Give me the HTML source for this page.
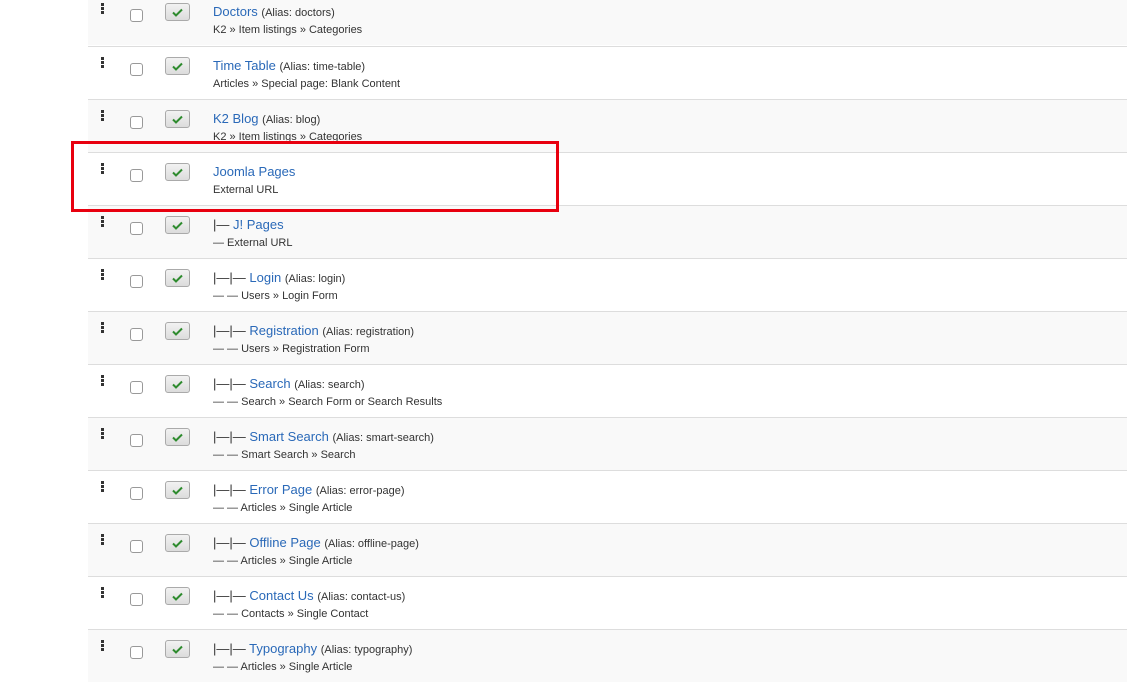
<!DOCTYPE html>
<html><head><style>
body{margin:0;width:1127px;height:662px;overflow:hidden;background:#fff;font-family:"Liberation Sans",Arial,sans-serif;position:relative}
.row{position:absolute;left:88px;width:1039px;height:52px;border-top:1px solid #ddd}
.g{background:#f9f9f9}
.drag{position:absolute;left:13px;top:10px;width:3px;height:11px;background:repeating-linear-gradient(#333 0 3px,transparent 3px 4px)}
.cb{position:absolute;left:42px;top:16px;width:11px;height:11px;border:1px solid #999;border-radius:3px;background:#fff}
.btn{position:absolute;left:77px;top:10px;width:23px;height:16px;border:1px solid #aaa;border-radius:3px;background:linear-gradient(#f2f2f2,#dcdcdc)}
.btn svg{position:absolute;left:6px;top:4px}
.t{position:absolute;left:125px;top:11px;font-size:13px;color:#333;white-space:nowrap}
.t a{color:#2a69b8;text-decoration:none}
.t small{font-size:11px;color:#333}
.s{position:absolute;left:125px;top:31px;font-size:11px;color:#333;white-space:nowrap}
.red{position:absolute;left:71px;top:141px;width:482px;height:65px;border:3px solid #e8000f}
</style></head><body>
<div class="row g" style="top:-7px;border-top:none"><div class="drag"></div><div class="cb"></div><div class="btn"><svg width="11" height="9"><path d="M1 4.5l3 3 6-6" stroke="#2e8b2e" stroke-width="2" fill="none"/></svg></div><div class="t"><a>Doctors</a> <small>(Alias: doctors)</small></div><div class="s">K2 » Item listings » Categories</div></div>
<div class="row" style="top:46px"><div class="drag"></div><div class="cb"></div><div class="btn"><svg width="11" height="9"><path d="M1 4.5l3 3 6-6" stroke="#2e8b2e" stroke-width="2" fill="none"/></svg></div><div class="t"><a>Time Table</a> <small>(Alias: time-table)</small></div><div class="s">Articles » Special page: Blank Content</div></div>
<div class="row g" style="top:99px"><div class="drag"></div><div class="cb"></div><div class="btn"><svg width="11" height="9"><path d="M1 4.5l3 3 6-6" stroke="#2e8b2e" stroke-width="2" fill="none"/></svg></div><div class="t"><a>K2 Blog</a> <small>(Alias: blog)</small></div><div class="s">K2 » Item listings » Categories</div></div>
<div class="row" style="top:152px"><div class="drag"></div><div class="cb"></div><div class="btn"><svg width="11" height="9"><path d="M1 4.5l3 3 6-6" stroke="#2e8b2e" stroke-width="2" fill="none"/></svg></div><div class="t"><a>Joomla Pages</a></div><div class="s">External URL</div></div>
<div class="row g" style="top:205px"><div class="drag"></div><div class="cb"></div><div class="btn"><svg width="11" height="9"><path d="M1 4.5l3 3 6-6" stroke="#2e8b2e" stroke-width="2" fill="none"/></svg></div><div class="t">|— <a>J! Pages</a></div><div class="s">— External URL</div></div>
<div class="row" style="top:258px"><div class="drag"></div><div class="cb"></div><div class="btn"><svg width="11" height="9"><path d="M1 4.5l3 3 6-6" stroke="#2e8b2e" stroke-width="2" fill="none"/></svg></div><div class="t">|—|— <a>Login</a> <small>(Alias: login)</small></div><div class="s">— — Users » Login Form</div></div>
<div class="row g" style="top:311px"><div class="drag"></div><div class="cb"></div><div class="btn"><svg width="11" height="9"><path d="M1 4.5l3 3 6-6" stroke="#2e8b2e" stroke-width="2" fill="none"/></svg></div><div class="t">|—|— <a>Registration</a> <small>(Alias: registration)</small></div><div class="s">— — Users » Registration Form</div></div>
<div class="row" style="top:364px"><div class="drag"></div><div class="cb"></div><div class="btn"><svg width="11" height="9"><path d="M1 4.5l3 3 6-6" stroke="#2e8b2e" stroke-width="2" fill="none"/></svg></div><div class="t">|—|— <a>Search</a> <small>(Alias: search)</small></div><div class="s">— — Search » Search Form or Search Results</div></div>
<div class="row g" style="top:417px"><div class="drag"></div><div class="cb"></div><div class="btn"><svg width="11" height="9"><path d="M1 4.5l3 3 6-6" stroke="#2e8b2e" stroke-width="2" fill="none"/></svg></div><div class="t">|—|— <a>Smart Search</a> <small>(Alias: smart-search)</small></div><div class="s">— — Smart Search » Search</div></div>
<div class="row" style="top:470px"><div class="drag"></div><div class="cb"></div><div class="btn"><svg width="11" height="9"><path d="M1 4.5l3 3 6-6" stroke="#2e8b2e" stroke-width="2" fill="none"/></svg></div><div class="t">|—|— <a>Error Page</a> <small>(Alias: error-page)</small></div><div class="s">— — Articles » Single Article</div></div>
<div class="row g" style="top:523px"><div class="drag"></div><div class="cb"></div><div class="btn"><svg width="11" height="9"><path d="M1 4.5l3 3 6-6" stroke="#2e8b2e" stroke-width="2" fill="none"/></svg></div><div class="t">|—|— <a>Offline Page</a> <small>(Alias: offline-page)</small></div><div class="s">— — Articles » Single Article</div></div>
<div class="row" style="top:576px"><div class="drag"></div><div class="cb"></div><div class="btn"><svg width="11" height="9"><path d="M1 4.5l3 3 6-6" stroke="#2e8b2e" stroke-width="2" fill="none"/></svg></div><div class="t">|—|— <a>Contact Us</a> <small>(Alias: contact-us)</small></div><div class="s">— — Contacts » Single Contact</div></div>
<div class="row g" style="top:629px"><div class="drag"></div><div class="cb"></div><div class="btn"><svg width="11" height="9"><path d="M1 4.5l3 3 6-6" stroke="#2e8b2e" stroke-width="2" fill="none"/></svg></div><div class="t">|—|— <a>Typography</a> <small>(Alias: typography)</small></div><div class="s">— — Articles » Single Article</div></div>
<div class="red"></div>
</body></html>
